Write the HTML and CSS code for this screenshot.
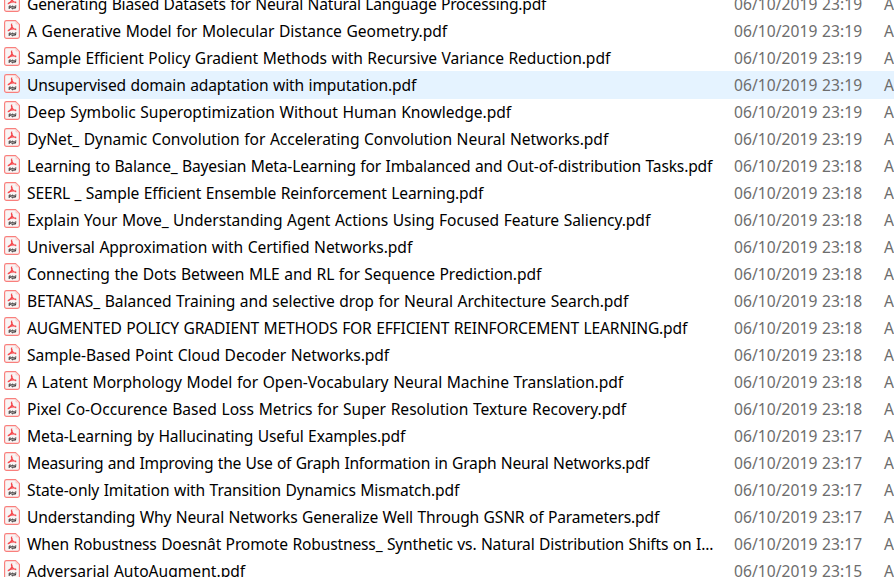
FILE: index.html
```html
<!DOCTYPE html>
<html lang="en">
<head>
<meta charset="utf-8">
<title>Papers</title>
<link rel="stylesheet" href="styles.css">
</head>
<body>
<svg class="defs" aria-hidden="true">
  <symbol id="pdf" viewBox="0 0 16 19">
    <path d="M2.500.6H11.500L15.400 4.500v12a1.900 1.900 0 0 1-1.900 1.900h-11A1.900 1.900 0 0 1 .6 16.500V2.500A1.900 1.900 0 0 1 2.500.6Z" fill="#f8f4f4" stroke="#f97f7c" stroke-width="1.150"/>
    <path d="M11.500.8V3.200Q11.500 4.500 12.800 4.500H15.200Z" fill="#fbd0ce"/>
    <path d="M7.800 4C7.200 4.300 7.500 5.800 7.900 6.700C8.700 8.300 10 9.500 11.700 9.700M8.200 5.800C7.800 7.700 6.600 9.600 4.200 10.700M5 9.900C7 8.900 9.500 8.700 11.700 9.100" fill="none" stroke="#f5474c" stroke-width="1.250" stroke-linecap="round"/>
    <path d="M5.200 16v-3h1q1.100.1 1 .9t-1.800.8M8 13v2.900q1.800.1 1.800-1.400T8 13M10.900 16v-3h1.500M10.900 14.500h1.200" fill="none" stroke="#3f3a3a" stroke-width="1"/>
  </symbol>
</svg>
<main class="files" id="files"></main>
<script src="files.js"></script>
</body>
</html>
```
FILE: styles.css
```css
* { box-sizing: border-box; }

body {
  margin: 0;
  height: 577px;
  overflow: hidden;
  background: #fff;
  color: #000;
  font: 15.6px/27px "Noto Sans", "Open Sans", sans-serif;
}

.defs { display: block; width: 0; height: 0; }

.files { margin-top: -10px; width: 894px; overflow: hidden; }

.row {
  display: grid;
  grid-template-columns: 27px 707px 150px 60px;
  width: 944px;
  height: 27px;
  white-space: pre;
}

.row.hover { background: #e5f3ff; box-shadow: 0 1px #e5f3ff; }

.icon { display: block; width: 16px; height: 19px; margin: 3px 0 0 4px; }

.text { justify-self: start; padding-top: 1px; height: 27px; word-spacing: 0.6px; }

.meta { color: #6d6d6d; }
```
FILE: files.js
```js
// [name, text width in px, modified time]
const files = [
  ["Generating Biased Datasets for Neural Natural Language Processing.pdf", 520, "23:19"],
  ["A Generative Model for Molecular Distance Geometry.pdf", 421, "23:19"],
  ["Sample Efficient Policy Gradient Methods with Recursive Variance Reduction.pdf", 584, "23:19"],
  ["Unsupervised domain adaptation with imputation.pdf", 390, "23:19"],
  ["Deep Symbolic Superoptimization Without Human Knowledge.pdf", 485, "23:19"],
  ["DyNet_ Dynamic Convolution for Accelerating Convolution Neural Networks.pdf", 582, "23:19"],
  ["Learning to Balance_ Bayesian Meta-Learning for Imbalanced and Out-of-distribution Tasks.pdf", 686, "23:18"],
  ["SEERL _ Sample Efficient Ensemble Reinforcement Learning.pdf", 457, "23:18"],
  ["Explain Your Move_ Understanding Agent Actions Using Focused Feature Saliency.pdf", 624, "23:18"],
  ["Universal Approximation with Certified Networks.pdf", 386, "23:18"],
  ["Connecting the Dots Between MLE and RL for Sequence Prediction.pdf", 515, "23:18"],
  ["BETANAS_ Balanced Training and selective drop for Neural Architecture Search.pdf", 602, "23:18"],
  ["AUGMENTED POLICY GRADIENT METHODS FOR EFFICIENT REINFORCEMENT LEARNING.pdf", 661, "23:18"],
  ["Sample-Based Point Cloud Decoder Networks.pdf", 363, "23:18"],
  ["A Latent Morphology Model for Open-Vocabulary Neural Machine Translation.pdf", 597, "23:18"],
  ["Pixel Co-Occurence Based Loss Metrics for Super Resolution Texture Recovery.pdf", 600, "23:18"],
  ["Meta-Learning by Hallucinating Useful Examples.pdf", 379, "23:17"],
  ["Measuring and Improving the Use of Graph Information in Graph Neural Networks.pdf", 623, "23:17"],
  ["State-only Imitation with Transition Dynamics Mismatch.pdf", 433, "23:17"],
  ["Understanding Why Neural Networks Generalize Well Through GSNR of Parameters.pdf", 633, "23:17"],
  ["When Robustness Doesnât Promote Robustness_ Synthetic vs. Natural Distribution Shifts on I...", 687, "23:17"],
  ["Adversarial AutoAugment.pdf", 219, "23:15"]
];

function addText(row, text, width, meta) {
  const el = document.createElement("span");
  el.className = meta ? "text meta" : "text";
  el.textContent = text;
  row.append(el);
  if (width) {
    const gap = (width - el.getBoundingClientRect().width) / text.length;
    el.style.letterSpacing = gap.toFixed(4) + "px";
  }
}

const list = document.getElementById("files");
files.forEach(([name, width, time], i) => {
  const row = document.createElement("div");
  row.className = i === 3 ? "row hover" : "row";
  row.innerHTML = '<svg class="icon"><use href="#pdf"/></svg>';
  list.append(row);
  addText(row, name, width - 0.8, false);
  addText(row, "06/10/2019 " + time, 128.2, true);
  addText(row, "A", 0, true);
});
```
